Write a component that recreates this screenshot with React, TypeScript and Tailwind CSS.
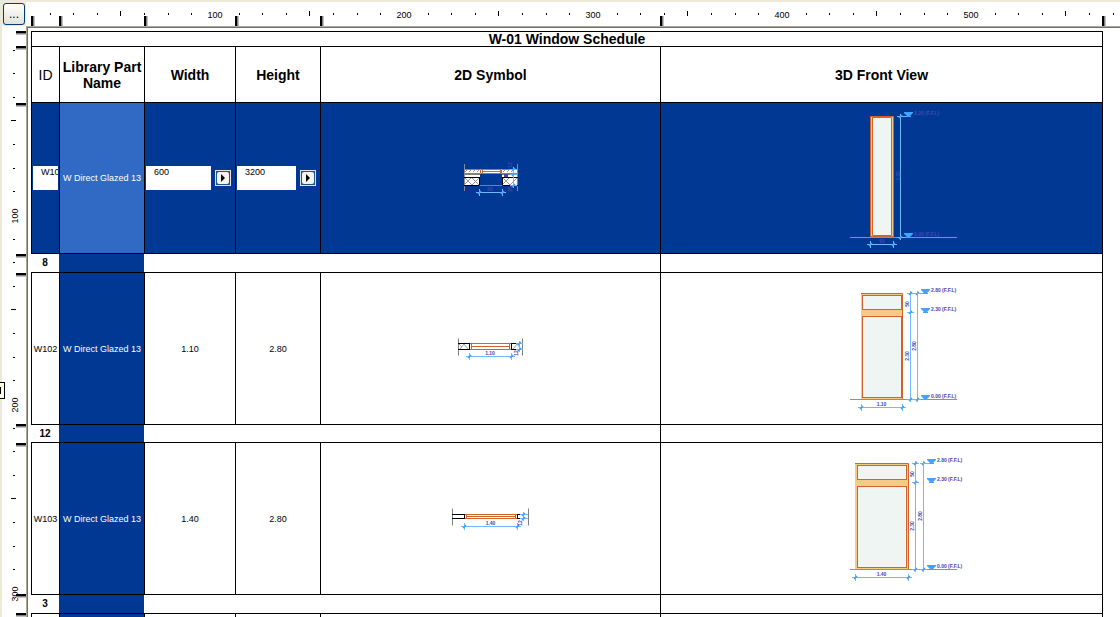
// Window schedule view: ruler bars on the top and left, the schedule table inside.
const COLUMN_MARKS = [31, 59, 144, 235, 320, 660, 1102];
const ROW_MARKS = [31, 46, 103, 254, 273, 424, 443, 594, 613];
const TICK_STEP = 23.625;
const TICK_START = 214.9;

function ticks(count: number) {
  return Array.from({ length: count }, (_, i) => i - 7).map((k) => ({
    k,
    pos: Math.round(TICK_START + TICK_STEP * k),
  }));
}

// Both rulers count from the window edge, so they start 26px in.
function TopRuler() {
  return (
    <svg
      className="block h-6 w-full bg-white text-[9px] font-['Liberation_Sans',sans-serif]"
      shapeRendering="crispEdges"
    >
      <g transform="translate(-26 -2)">
        {ticks(46).map(({ k, pos }) =>
          k % 8 === 0 ? (
            <text key={k} x={pos} y={18} textAnchor="middle">
              {100 + (k / 8) * 100}
            </text>
          ) : (
            <rect key={k} x={pos} y={k % 4 === 0 ? 11 : 13} width={1} height={k % 4 === 0 ? 5 : 2} />
          ),
        )}
        {COLUMN_MARKS.map((x) => (
          <g key={x}>
            <rect x={x} y={16} width={2} height={10} />
            <rect x={x + 2} y={16} width={1} height={10} fill="#808080" />
            <rect x={x + 3} y={16} width={1} height={10} fill="#c0c0c0" />
          </g>
        ))}
      </g>
    </svg>
  );
}

function SideRuler() {
  return (
    <svg
      className="block h-full w-6 bg-white text-[9px] font-['Liberation_Sans',sans-serif]"
      shapeRendering="crispEdges"
    >
      <g transform="translate(-2 -26)">
        {ticks(25).map(({ k, pos }) =>
          k % 8 === 0 ? (
            <text key={k} transform={`translate(18 ${pos + 1}) rotate(-90)`} textAnchor="middle">
              {100 + (k / 8) * 100}
            </text>
          ) : (
            <rect key={k} x={k % 4 === 0 ? 11 : 13} y={pos} width={k % 4 === 0 ? 5 : 2} height={1} />
          ),
        )}
        {ROW_MARKS.map((y) => (
          <g key={y}>
            <rect x={16} y={y} width={10} height={2} />
            <rect x={16} y={y + 2} width={10} height={1} fill="#808080" />
            <rect x={16} y={y + 3} width={10} height={1} fill="#c0c0c0" />
          </g>
        ))}
      </g>
    </svg>
  );
}

const DIM = '#6eb9ff';
const LABEL = '#4646b8';
const TIMBER = '#d2642a';

function Tick({ x, y, vertical = false }: { x: number; y: number; vertical?: boolean }) {
  return (
    <g>
      <path d={vertical ? `M${x - 3} ${y + 0.5}h7` : `M${x + 0.5} ${y - 3}v7`} stroke={DIM} />
      <path d={`M${x - 1} ${y + 2}l3 -3`} stroke="#3ca0ff" strokeWidth={1.5} />
    </g>
  );
}

function DimH({ x1, x2, y }: { x1: number; x2: number; y: number }) {
  return (
    <g>
      <path d={`M${x1 - 3} ${y + 0.5}H${x2 + 4}`} stroke={DIM} />
      <Tick x={x1} y={y} />
      <Tick x={x2} y={y} />
    </g>
  );
}

function DimV({ x, stops }: { x: number; stops: number[] }) {
  return (
    <g>
      <path d={`M${x + 0.5} ${stops[0] - 2}V${stops[stops.length - 1] + 3}`} stroke={DIM} />
      {stops.map((y) => (
        <Tick key={y} x={x} y={y} vertical />
      ))}
    </g>
  );
}

function DimText({ x, y, text, rotated = false }: { x: number; y: number; text: string; rotated?: boolean }) {
  return (
    <text transform={`translate(${x} ${y})${rotated ? ' rotate(-90)' : ''}`} textAnchor="middle" fill={LABEL}>
      {text}
    </text>
  );
}

function Level({ x, y, text }: { x: number; y: number; text: string }) {
  return (
    <g>
      <path d={`M${x} ${y - 4}h9v1l-3 3v1h-3v-1l-3 -3z`} fill="#41a2ff" />
      <path d={`M${x + 2} ${y + 0.5}h5`} stroke="#41a2ff" />
      <text x={x + 10} y={y - 1} fill={LABEL}>
        {text} (F.F.L)
      </text>
    </g>
  );
}

const DRAWING = "block mx-auto overflow-visible text-[5px] font-bold font-['Liberation_Sans',sans-serif]";

function PlanRecessed() {
  return (
    <svg width="101" height="56" viewBox="0 0 101 56" className={DRAWING} fill="none">
      <path d="M25 19h15v17H25zM62 19h15v17H62z" fill="#fff" />
      <path
        d="M25 22l3 -3M29 22l3 -3M33 22l3 -3M37 22l3 -3M63 22l3 -3M67 22l3 -3M71 22l3 -3M25 28l7 7l7 -7M25 34l6 -6M32 28l7 7M63 28l7 7l7 -7M63 34l6 -6"
        stroke="#999"
      />
      <path d="M25 19.5h15M62 19.5h15M25 24.5h15M62 24.5h15" stroke="#808080" />
      <path d="M25 23.5h15M62 23.5h15" stroke="#808080" />
      <path d="M24.5 14v27M77.5 14v27" stroke="#8a8a8a" />
      <path d="M24 27.5h16M24 35.5h15.5V27M78 27.5H62M78 35.5H62.5V27" stroke="#000" />
      <path d="M40 19h22v5H40z" fill="#fff" />
      <path d="M40.5 19.5h21v4h-21zM42 21.5h18M42.5 19v4M60.5 19v4M40 35.5h22" stroke={TIMBER} />
      <path d="M64 24h4v3h-4z" fill={LABEL} />
      <DimV x={73} stops={[19, 24, 35]} />
      <DimH x1={39} x2={62} y={42} />
      <DimText x={50} y={41} text="60" />
      <DimText x={72} y={15} text="12" rotated />
      <DimText x={72} y={39} text="25" rotated />
    </svg>
  );
}

type PlanProps = {
  start: number;
  left: number;
  right: number;
  end: number;
  top: number;
  bottom: number;
  dimX: number;
  text: string;
};

function Plan({ start, left, right, end, top, bottom, dimX, text }: PlanProps) {
  const hatched = bottom - top > 4;
  return (
    <svg width="101" height="47" viewBox="0 0 101 47" className={DRAWING} fill="none">
      <path d={`M${start + 0.5} 13.5v17M${end + 0.5} 13.5v17`} stroke="#808080" />
      {hatched && (
        <path d={`M20 ${bottom}l4 -5l4 5M19 ${top + 1}l3 3M73 ${bottom}l4 -5l4 5`} stroke="#a0a0a0" />
      )}
      <g shapeRendering="crispEdges">
        <path
          d={`M${start} ${top + 0.5}H${left + 0.5}V${bottom + 0.5}H${start}M${dimX - 3} ${top + 0.5}H${right + 0.5}V${bottom + 0.5}H${dimX - 3}`}
          stroke="#000"
        />
        <path
          d={`M${left + 1} ${top + 0.5}H${right}M${left + 1} ${bottom + 0.5}H${right}M${left + 2} ${(top + bottom) / 2 + 0.5}H${right - 1}M${left + 2.5} ${top}V${bottom}M${right - 1.5} ${top}V${bottom}`}
          stroke={TIMBER}
        />
        <path d={`M${dimX - 3} ${top + 0.5}H${end}M${dimX - 3} ${bottom + 0.5}H${end}`} stroke={DIM} />
      </g>
      <DimV x={dimX} stops={[top, bottom]} />
      <DimH x1={left} x2={right} y={31} />
      <DimText x={(left + right) / 2} y={30} text={text} />
      <DimText x={dimX - 1} y={28} text="12" rotated />
    </svg>
  );
}

function FrontTall() {
  return (
    <svg width="183" height="150" viewBox="-50 3 183 150" className={DRAWING} fill="none">
      <path d="M30.5 16.5h23v120h-23z" fill="#f3cb85" stroke={TIMBER} />
      <path d="M32.5 17.5h19v118h-19z" fill="#eff5f2" stroke={TIMBER} />
      <path d="M10 137.5h107" stroke="#41a2ff" />
      <path d="M58 16.5h12M58 137.5h8" stroke={DIM} />
      <DimV x={60} stops={[16, 137]} />
      <DimH x1={30} x2={53} y={144} />
      <Level x={64} y={16} text="3.20" />
      <Level x={64} y={137} text="0.00" />
      <DimText x={60} y={76} text="3.20" rotated />
      <DimText x={42} y={143} text="60" />
    </svg>
  );
}

type FrontProps = { left: number; right: number; inset: number; dim: number; dimTotal: number; text: string };

function Front({ left, right, inset, dim, dimTotal, text }: FrontProps) {
  const paneX = left + inset;
  const paneW = right - inset - paneX + 1;
  return (
    <svg width="183" height="137" viewBox="-50 0 183 137" className={DRAWING} fill="none">
      <path d={`M${left} 13h${right - left}v106H${left}z`} fill="#f3cb85" />
      <path d={`M${left} 13.5H${right + 0.5}V119`} stroke={TIMBER} />
      <rect x={paneX + 0.5} y={15.5} width={paneW - 1} height={14} fill="#eff5f2" stroke={TIMBER} />
      <rect x={paneX + 0.5} y={36.5} width={paneW - 1} height={81} fill="#eff5f2" stroke={TIMBER} />
      <path d="M10 119.5h107" stroke="#41a2ff" />
      <DimV x={dim} stops={[13, 32, 119]} />
      <DimV x={dimTotal} stops={[13, 119]} />
      <path d={`M${dimTotal} 13.5h11`} stroke={DIM} />
      <DimH x1={left} x2={right} y={127} />
      <Level x={dimTotal + 4} y={13} text="2.80" />
      <Level x={dimTotal + 4} y={32} text="2.30" />
      <Level x={dimTotal + 4} y={119} text="0.00" />
      <DimText x={dim - 1} y={24} text="50" rotated />
      <DimText x={dim - 1} y={76} text="2.30" rotated />
      <DimText x={dimTotal - 1} y={66} text="2.80" rotated />
      <DimText x={(left + right) / 2} y={126} text={text} />
    </svg>
  );
}

function EditField({ label, value }: { label: string; value: string }) {
  return (
    <div className="flex items-center gap-1 pr-1 pl-px">
      <input
        aria-label={label}
        defaultValue={value}
        className="h-6 min-w-0 flex-1 bg-white pb-3 pl-2 text-black outline-none"
      />
      <button
        aria-label={`${label} options`}
        className="flex size-4 shrink-0 items-center justify-center border border-[#dfe3e0] bg-[#1f5688] p-px"
      >
        <span className="flex size-3 items-center justify-center rounded-xs bg-[#f4f3ee]">
          <svg width="4" height="8" viewBox="0 0 4 8" aria-hidden="true">
            <path d="M0 0l4 4l-4 4z" />
          </svg>
        </span>
      </button>
    </div>
  );
}

const CELL = 'border-t border-l border-black p-0';
const HEAD = `${CELL} text-sm leading-4 font-bold`;

function TotalRow({ count, height }: { count: number; height: string }) {
  return (
    <tr className={height}>
      <td className="border-t border-black p-0 text-[10px] leading-3 font-bold">{count}</td>
      <td className="border-t border-black bg-[#003893] p-0" />
      <td colSpan={3} className="border-t border-black p-0" />
      <td className="border-t border-r border-l border-black p-0" />
    </tr>
  );
}

const WINDOWS = [
  {
    id: 'W102',
    width: '1.10',
    height: '2.80',
    count: 12,
    totalHeight: 'h-[18px]',
    plan: <Plan start={18} left={29} right={71} end={82} top={18} bottom={24} dimX={79} text="1.10" />,
    front: <Front left={21} right={62} inset={1} dim={70} dimTotal={77} text="1.10" />,
  },
  {
    id: 'W103',
    width: '1.40',
    height: '2.80',
    count: 3,
    totalHeight: 'h-[19px]',
    plan: <Plan start={12} left={24} right={77} end={88} top={19} bottom={23} dimX={83} text="1.40" />,
    front: <Front left={15} right={68} inset={2} dim={75} dimTotal={83} text="1.40" />,
  },
];

function Schedule() {
  return (
    <table className="w-full table-fixed border-separate border-spacing-0 text-center text-[9px] leading-3">
      <colgroup>
        <col className="w-[28px]" />
        <col className="w-[85px]" />
        <col className="w-[91px]" />
        <col className="w-[85px]" />
        <col className="w-[340px]" />
        <col />
      </colgroup>
      <thead>
        <tr className="h-[15px]">
          <th colSpan={6} className={`${CELL} border-r text-sm leading-[14px] font-bold`}>
            W-01 Window Schedule
          </th>
        </tr>
        <tr className="h-14">
          <th className={`${CELL} text-sm leading-4 font-normal`}>ID</th>
          <th className={HEAD}>Library Part Name</th>
          <th className={HEAD}>Width</th>
          <th className={HEAD}>Height</th>
          <th className={HEAD}>2D Symbol</th>
          <th className={`${HEAD} border-r`}>3D Front View</th>
        </tr>
      </thead>
      <tbody>
        <tr className="h-[151px] bg-[#003893] text-white">
          <td className={CELL}>
            <div className="px-px">
              <input
                aria-label="ID"
                defaultValue="W101"
                className="block h-6 w-full bg-white pb-3 pl-2 text-black outline-none"
              />
            </div>
          </td>
          <td className={`${CELL} bg-[#316ac5] whitespace-nowrap`}>W Direct Glazed 13</td>
          <td className={CELL}>
            <EditField label="Width" value="600" />
          </td>
          <td className={CELL}>
            <EditField label="Height" value="3200" />
          </td>
          <td className={CELL}>
            <PlanRecessed />
          </td>
          <td className={`${CELL} border-r`}>
            <FrontTall />
          </td>
        </tr>
        <TotalRow count={8} height="h-[19px]" />
        {WINDOWS.map((w) => [
          <tr key={w.id} className="h-[152px]">
            <td className={`${CELL} whitespace-nowrap`}>{w.id}</td>
            <td className={`${CELL} bg-[#003893] whitespace-nowrap text-white`}>W Direct Glazed 13</td>
            <td className={CELL}>{w.width}</td>
            <td className={CELL}>{w.height}</td>
            <td className={CELL}>{w.plan}</td>
            <td className={`${CELL} border-r`}>{w.front}</td>
          </tr>,
          <TotalRow key={`${w.id}-total`} count={w.count} height={w.totalHeight} />,
        ])}
        {/* Next item, cut off by the window edge */}
        <tr className="h-[152px]">
          <td className={CELL} />
          <td className={`${CELL} bg-[#003893]`} />
          <td className={CELL} />
          <td className={CELL} />
          <td className={CELL} />
          <td className={`${CELL} border-r`} />
        </tr>
      </tbody>
    </table>
  );
}

export default function App() {
  return (
    <div className="relative grid h-screen grid-cols-[26px_minmax(0,1fr)] grid-rows-[26px_minmax(0,1fr)] overflow-hidden bg-[#ece9d8] font-['Liberation_Sans',sans-serif] text-black">
      <div className="pt-[3px] pl-[3px]">
        <button className="block size-[22px] rounded-[3px] border border-[#003c74] bg-linear-to-b from-white to-[#e3e1d8] text-xs leading-5">
          ...
        </button>
      </div>
      <div className="overflow-hidden pt-[2px]">
        <TopRuler />
      </div>
      <div className="overflow-hidden pl-[2px]">
        <SideRuler />
      </div>
      <main className="overflow-hidden border-t border-l border-[#aca899] bg-[#716f64] pt-px pl-px">
        <div className="h-full bg-white pt-[3px] pr-[17px] pl-[3px]">
          <Schedule />
        </div>
      </main>
      {/* Edge of a tooltip that hangs over the left side */}
      <div className="absolute top-[382px] left-0 h-[17px] w-[5px] border border-l-0 border-black bg-[#ffffe1] py-1">
        <div className="h-full w-px bg-black" />
      </div>
    </div>
  );
}
